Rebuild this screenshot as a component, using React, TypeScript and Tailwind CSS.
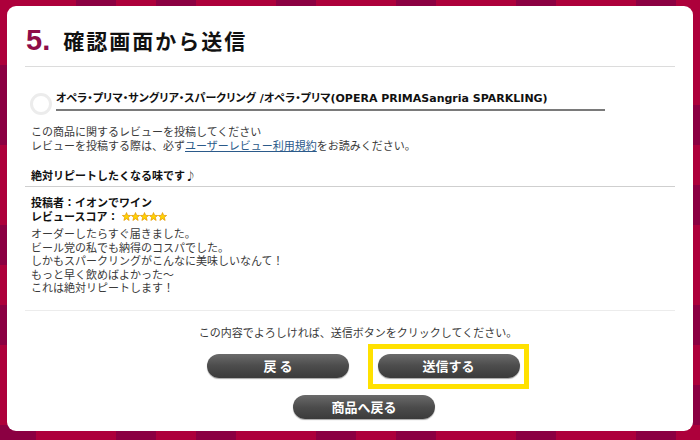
const jp = "font-['Noto_Sans_CJK_JP',sans-serif]";

// crimson checker pattern behind the card: 1 = dark cell
const pattern = [
  "0010100100100100101",
  "0100010010001001001",
  "1000100001010000100",
  "1001001010000101011",
  "0010010000101000100",
  "0100100101000010011",
  "1010001000100100100",
  "0001010010010001000",
  "1100100100001010011",
  "0010001001010000100",
  "0101010000100100011",
  "1001010010100100100",
];

const body = [
  "オーダーしたらすぐ届きました。",
  "ビール党の私でも納得のコスパでした。",
  "しかもスパークリングがこんなに美味しいなんて！",
  "もっと早く飲めばよかった～",
  "これは絶対リピートします！",
];

function Star() {
  return (
    <svg width="9" height="9" viewBox="0 0 24 24" className="inline-block">
      <polygon
        points="12,1.5 15,9 23,9.3 16.8,14.3 19,22.5 12,17.8 5,22.5 7.2,14.3 1,9.3 9,9"
        fill="#ffd400"
        stroke="#e59a00"
        strokeWidth="2"
        strokeLinejoin="round"
      />
    </svg>
  );
}

function PillButton({ label }: { label: string }) {
  return (
    <button
      className={`flex h-[24px] w-[142px] items-center justify-center rounded-full bg-gradient-to-b from-[#6b6b6b] via-[#4c4c4c] to-[#3b3b3b] text-[13px] font-bold text-white shadow-[0_1px_1px_rgba(0,0,0,0.35)] ${jp}`}
    >
      {label}
    </button>
  );
}

export default function App() {
  return (
    <div className="relative h-[440px] w-[700px] overflow-hidden bg-[#ad003b]">
      <div className="absolute left-[-4px] top-[-15px] flex flex-col">
        {pattern.map((row, r) => (
          <div key={r} className="flex">
            {row.split("").map((c, i) => (
              <div key={i} className={`h-[40px] w-[40px] ${c === "1" ? "bg-[#8b0042]" : "bg-[#ad003b]"}`} />
            ))}
          </div>
        ))}
      </div>

      <div className="relative ml-[7px] mt-[6px] h-[425px] w-[686px] rounded-[9px] bg-white">
        <div className="box-content flex h-[30px] items-center pl-[19px] pt-[19px]">
          <span className="font-['Liberation_Sans',sans-serif] text-[29px] font-bold leading-none text-[#8e0c48]">5.</span>
          <span className={`ml-[13px] text-[21px] font-bold leading-none tracking-[2px] text-[#111] ${jp}`}>確認画面から送信</span>
        </div>

        <div className="mx-[18px] mt-[11px] border-t border-[#dcdcdc]" />

        <div className="mt-[25px] flex items-start">
          <div className="ml-[23px] mt-[1px] h-[22px] w-[22px] rounded-full border-[3px] border-[#ececec]" />
          <div className="ml-[4px] w-[549px] border-b-2 border-[#7a7a7a] pb-[3px] font-['DejaVu_Sans','Noto_Sans_CJK_JP',sans-serif] text-[11px] font-bold leading-[14px] text-[#111] [font-feature-settings:'palt']">
            オペラ・プリマ・サングリア・スパークリング /オペラ・プリマ(OPERA PRIMASangria SPARKLING)
          </div>
        </div>

        <p className={`mt-[10px] pl-[24px] text-[11px] leading-[13.5px] text-[#3a3a3a] ${jp}`}>
          この商品に関するレビューを投稿してください
          <br />
          レビューを投稿する際は、必ず
          <a className="text-[#2b5a8a] underline">ユーザーレビュー利用規約</a>
          をお読みください。
        </p>

        <div className={`mx-[18px] mt-[16px] border-b border-[#cfcfcf] pb-[4px] pl-[6px] text-[11px] font-bold leading-[14px] text-[#111] ${jp}`}>
          絶対リピートしたくなる味です♪
        </div>

        <div className={`mt-[9px] pl-[24px] text-[11px] font-bold leading-[13.5px] text-[#111] ${jp}`}>
          <p>投稿者：イオンでワイン</p>
          <p className="flex items-center">
            レビュースコア：
            <span className="ml-[4px] flex">
              <Star />
              <Star />
              <Star />
              <Star />
              <Star />
            </span>
          </p>
        </div>

        <p className={`mt-[4px] pl-[24px] text-[11px] leading-[13.5px] text-[#3a3a3a] ${jp}`}>
          {body.map((line, i) => (
            <span key={line}>
              {line}
              {i < body.length - 1 && <br />}
            </span>
          ))}
        </p>

        <div className="mx-[18px] mt-[15px] border-t border-[#ececec]" />

        <p className={`mt-[14px] pl-[16px] text-center text-[11px] leading-[14px] text-[#3a3a3a] ${jp}`}>
          この内容でよろしければ、送信ボタンをクリックしてください。
        </p>

        <div className="mt-[5px] flex items-center pl-[200px]">
          <PillButton label="戻 る" />
          <div className="ml-[19px] flex h-[45px] w-[161px] items-center justify-center border-[5px] border-[#ffe100]">
            <PillButton label="送信する" />
          </div>
        </div>

        <div className="mt-[6px] pl-[286px]">
          <PillButton label="商品へ戻る" />
        </div>
      </div>
    </div>
  );
}
